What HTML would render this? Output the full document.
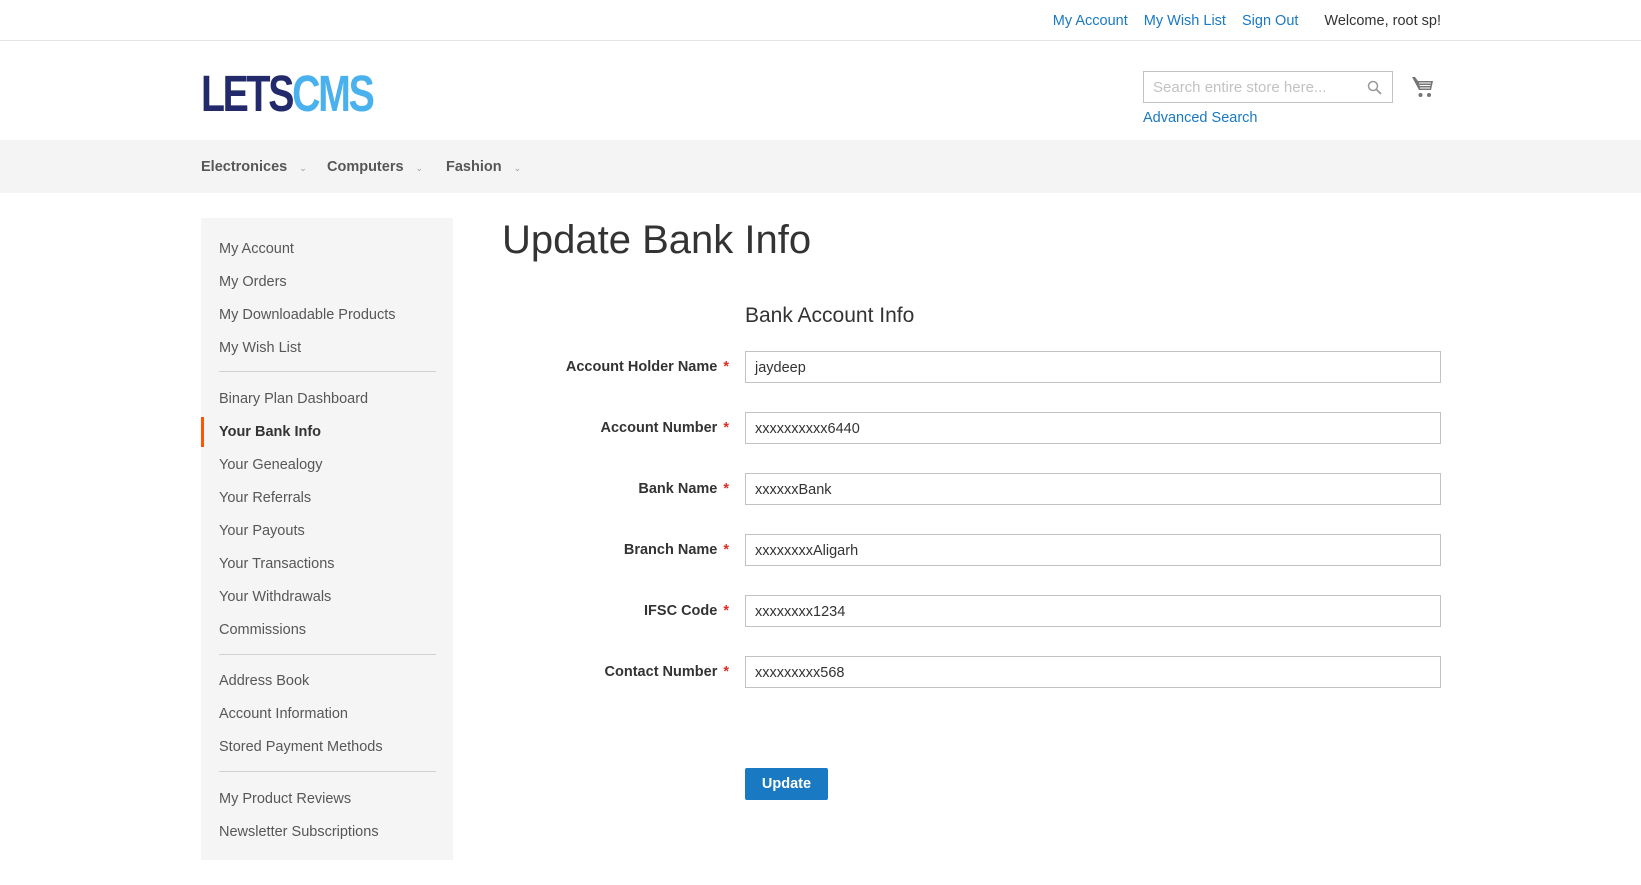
<!DOCTYPE html>
<html><head><meta charset="utf-8"><style>
*{box-sizing:border-box;margin:0;padding:0}
body{width:1641px;height:885px;background:#fff;font-family:"Liberation Sans",sans-serif;color:#333;font-size:14.5px;position:relative;overflow:hidden}
a{color:#1979c3;text-decoration:none}
.topbar{position:absolute;top:0;left:0;right:0;height:41px;border-bottom:1px solid #e4e4e4}
.toplinks{position:absolute;right:200px;top:13px;font-size:14.5px}
.toplinks a{margin-left:12px}
.toplinks span{margin-left:26px;color:#333}
.logo{position:absolute;left:201px;top:73px;font-family:"Liberation Sans",sans-serif;font-weight:bold;font-size:51px;letter-spacing:-3px;line-height:42px;transform:scaleX(0.77);transform-origin:left}
.logo .a{color:#222a6b}.logo .b{color:#49b1ed}
.search{position:absolute;left:1143px;top:71px;width:250px;height:32px;border:1px solid #c2c2c2;color:#c2c2c2;font-size:15px;padding:7px 9px}
.adv{position:absolute;left:1143px;top:110px;font-size:14.5px}
.nav{position:absolute;top:140px;left:0;right:0;height:53px;background:#f4f4f4}
.nav span{position:absolute;top:19px;font-weight:bold;color:#575757;font-size:14.5px}
.nav span i{font-style:normal;font-size:9px;color:#999;margin-left:12px;font-weight:normal}
.side{position:absolute;left:201px;top:218px;width:252px;height:642px;background:#f5f5f5}
.side div{position:absolute;left:18px;font-size:14.5px;color:#575757;margin-top:3px}
.side hr{position:absolute;left:18px;width:217px;border:0;border-top:1px solid #d1d1d1}
.side .cur{color:#333;font-weight:bold}
.bar{position:absolute;left:0;top:199px;width:3px;height:30px;background:#ff5501}
h1{position:absolute;left:502px;top:218px;font-size:40px;font-weight:normal;color:#333}
.legend{position:absolute;left:745px;top:304px;font-size:21px;color:#333}
.row{position:absolute;left:480px;width:961px;height:32px}
.row label{position:absolute;right:712px;top:8px;font-weight:bold;font-size:14.5px;white-space:nowrap}
.row label b{color:#e02b27;margin-left:6px}
.row div{position:absolute;left:265px;right:0;top:0;height:32px;border:1px solid #c2c2c2;padding:8px 9px;font-size:14.5px}
.btn{position:absolute;left:745px;top:768px;width:83px;height:32px;background:#1979c3;border:1px solid #1979c3;color:#fff;font-weight:bold;font-size:14.5px;text-align:center;line-height:31px;border-radius:2px}
</style></head><body>
<div class="topbar"><div class="toplinks"><a>My Account</a> <a>My Wish List</a> <a>Sign Out</a><span>Welcome, root sp!</span></div></div>
<div class="logo"><span class="a">LETS</span><span class="b">CMS</span></div>
<div class="search">Search entire store here...
<svg style="position:absolute;right:10px;top:8px" width="15" height="15" viewBox="0 0 15 15"><circle cx="6" cy="6" r="4.5" fill="none" stroke="#999" stroke-width="1.5"/><path d="M9.5 9.5L14 14" stroke="#999" stroke-width="1.8"/></svg></div>
<svg style="position:absolute;left:1411px;top:75px" width="24" height="24" viewBox="0 0 24 24"><path d="M1 2h3l3 4h15l-2 9H8z" fill="#757575"/><path d="M8 8h12M8.5 10.5h11M9 13h10" stroke="#fff" stroke-width="1"/><circle cx="9.5" cy="20" r="2" fill="#757575"/><circle cx="18" cy="20" r="2" fill="#757575"/></svg>
<a class="adv">Advanced Search</a>
<div class="nav"><span style="left:201px">Electronices<i>⌄</i></span><span style="left:327px">Computers<i>⌄</i></span><span style="left:446px">Fashion<i>⌄</i></span></div>
<div class="side">
<div style="top:20px">My Account</div><div style="top:53px">My Orders</div><div style="top:86px">My Downloadable Products</div><div style="top:119px">My Wish List</div>
<hr style="top:153px">
<div style="top:170px">Binary Plan Dashboard</div>
<span class="bar"></span>
<div class="cur" style="top:203px">Your Bank Info</div>
<div style="top:236px">Your Genealogy</div><div style="top:269px">Your Referrals</div><div style="top:302px">Your Payouts</div><div style="top:335px">Your Transactions</div><div style="top:368px">Your Withdrawals</div><div style="top:401px">Commissions</div>
<hr style="top:436px">
<div style="top:452px">Address Book</div><div style="top:485px">Account Information</div><div style="top:518px">Stored Payment Methods</div>
<hr style="top:553px">
<div style="top:570px">My Product Reviews</div><div style="top:603px">Newsletter Subscriptions</div>
</div>
<h1>Update Bank Info</h1>
<div class="legend">Bank Account Info</div>
<div class="row" style="top:351px"><label>Account Holder Name<b>*</b></label><div>jaydeep</div></div>
<div class="row" style="top:412px"><label>Account Number<b>*</b></label><div>xxxxxxxxxx6440</div></div>
<div class="row" style="top:473px"><label>Bank Name<b>*</b></label><div>xxxxxxBank</div></div>
<div class="row" style="top:534px"><label>Branch Name<b>*</b></label><div>xxxxxxxxAligarh</div></div>
<div class="row" style="top:595px"><label>IFSC Code<b>*</b></label><div>xxxxxxxx1234</div></div>
<div class="row" style="top:656px"><label>Contact Number<b>*</b></label><div>xxxxxxxxx568</div></div>
<div class="btn">Update</div>
</body></html>
